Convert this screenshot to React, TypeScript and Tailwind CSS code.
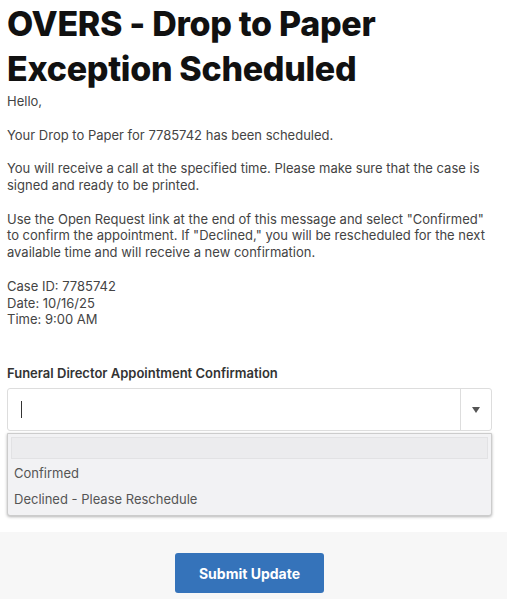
export default function App() {
  return (
    <div className="min-h-[599px] bg-white font-['Inter','Liberation_Sans',sans-serif] flex flex-col">
      <div className="px-[7px] pt-[1px]">
        <h1 className="text-[34px] leading-[45px] font-extrabold text-[#111] tracking-[-0.3px]">
          OVERS - Drop to Paper Exception Scheduled
        </h1>
        <div className="mt-[2px] w-[484px] text-[13px] leading-[16.8px] text-[#444] space-y-[16.8px]">
          <p>Hello,</p>
          <p>Your Drop to Paper for 7785742 has been scheduled.</p>
          <p>You will receive a call at the specified time. Please make sure that the case is signed and ready to be printed.</p>
          <p>
            Use the Open Request link at the end of this message and select "Confirmed" to confirm the appointment. If "Declined," you will be rescheduled for the next available time and will receive a new confirmation.
          </p>
          <p>
            Case ID: 7785742
            <br />
            Date: 10/16/25
            <br />
            Time: 9:00 AM
          </p>
        </div>

        <div className="mt-[37px] text-[13px] font-semibold text-[#333] leading-[16px]">
          Funeral Director Appointment Confirmation
        </div>

        <div className="mt-[7px] w-[485px]">
          <div className="flex h-[43px] border border-[#ddd] rounded-[3px] bg-white">
            <div className="flex-1 flex items-center pl-[13px]">
              <span className="w-px h-[17px] bg-[#333]" />
            </div>
            <div className="w-[31px] border-l border-[#ddd] flex items-center justify-center">
              <svg width="8" height="6" viewBox="0 0 8 6">
                <path d="M0 0h8L4 6z" fill="#555" />
              </svg>
            </div>
          </div>
          <div className="mt-[2px] bg-[#f2f2f4] border border-[#ccc] rounded-b-[3px] shadow-[0_1px_3px_rgba(0,0,0,0.3)] pb-[3px]">
            <div className="mx-[3px] mt-[3px] h-[22px] bg-[#ececee] border border-[#e2e2e4]" />
            <div className="px-[6px] text-[13px] text-[#555] leading-[26px] pt-[1px]">
              <div>Confirmed</div>
              <div>Declined - Please Reschedule</div>
            </div>
          </div>
        </div>
      </div>

      <div className="mt-[16px] flex-1 bg-[#f7f7f7] flex justify-center pt-[21px] pb-[10px] pr-[8px]">
        <button className="w-[149px] h-[40px] rounded-[3px] bg-[#3573ba] text-white text-[14px] font-bold">
          Submit Update
        </button>
      </div>
    </div>
  );
}
